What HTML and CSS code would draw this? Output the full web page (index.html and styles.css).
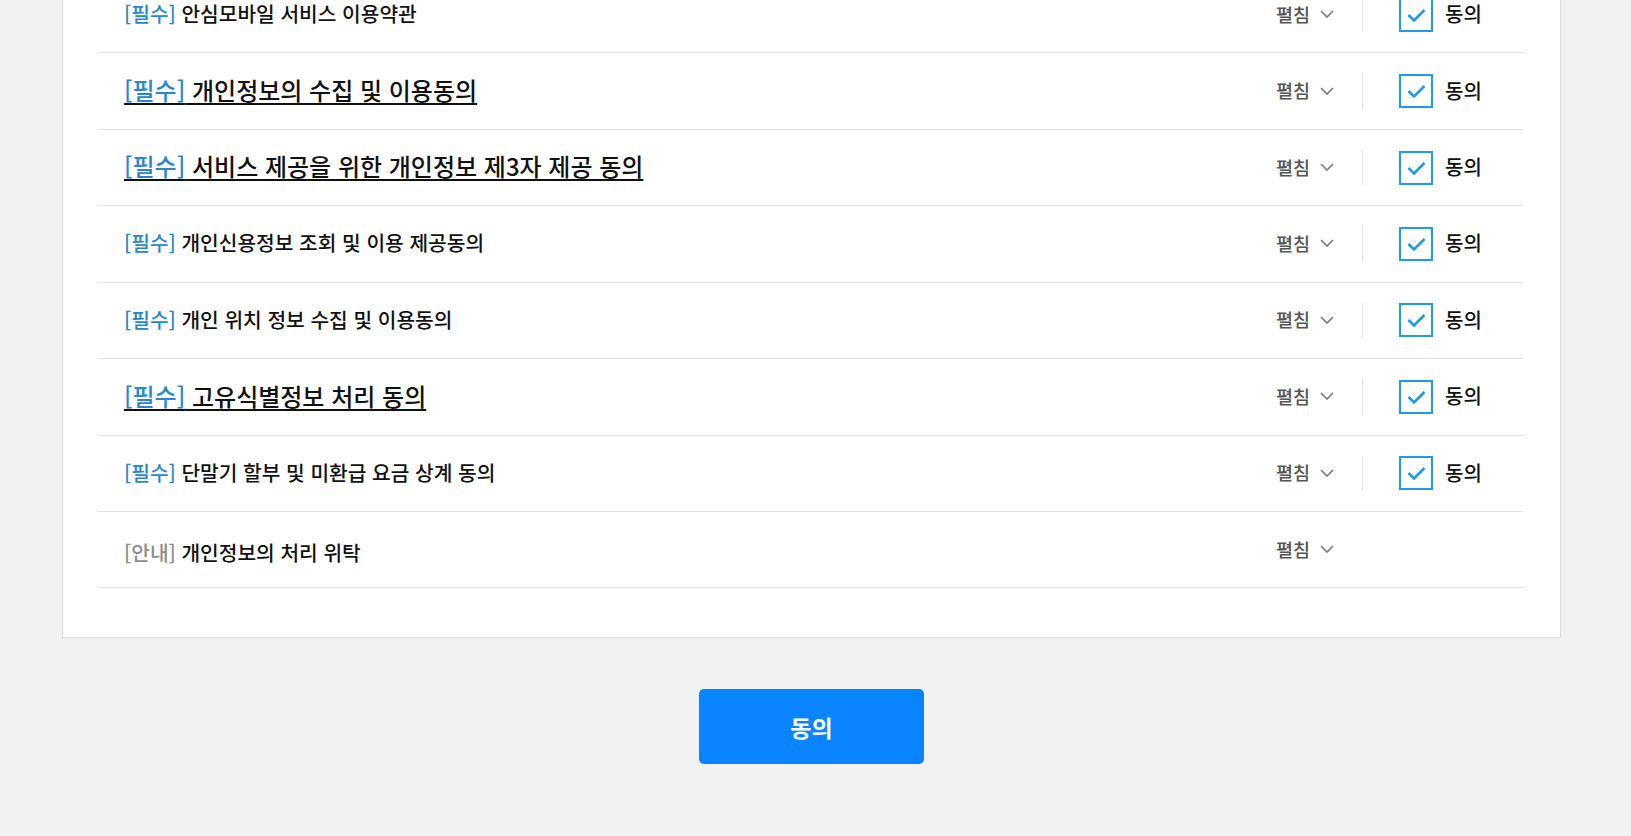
FILE: index.html
```html
<!DOCTYPE html>
<html lang="ko">
<head>
<meta charset="utf-8">
<title>약관 동의</title>
<link rel="stylesheet" href="styles.css">
</head>
<body>
<div class="page">
  <div class="card">
    <ul class="terms">
      <li class="term">
        <p class="label"><span class="tag">[필수]</span> 안심모바일 서비스 이용약관</p>
        <button class="toggle" type="button">펼침<svg class="chev" width="14" height="8" viewBox="0 0 14 8"><path d="M1 1l6 6 6-6" fill="none" stroke="#777" stroke-width="1.6"/></svg></button>
        <div class="agree"><span class="box"><svg width="30" height="30" viewBox="0 0 30 30"><path d="M7.5 15l5.5 5.5L23.5 10" fill="none" stroke="#1e9be4" stroke-width="2.6"/></svg></span><span class="agree-text">동의</span></div>
      </li>
      <li class="term">
        <p class="label label-lg"><span class="tag">[필수]</span> 개인정보의 수집 및 이용동의</p>
        <button class="toggle" type="button">펼침<svg class="chev" width="14" height="8" viewBox="0 0 14 8"><path d="M1 1l6 6 6-6" fill="none" stroke="#777" stroke-width="1.6"/></svg></button>
        <div class="agree"><span class="box"><svg width="30" height="30" viewBox="0 0 30 30"><path d="M7.5 15l5.5 5.5L23.5 10" fill="none" stroke="#1e9be4" stroke-width="2.6"/></svg></span><span class="agree-text">동의</span></div>
      </li>
      <li class="term">
        <p class="label label-lg"><span class="tag">[필수]</span> 서비스 제공을 위한 개인정보 제3자 제공 동의</p>
        <button class="toggle" type="button">펼침<svg class="chev" width="14" height="8" viewBox="0 0 14 8"><path d="M1 1l6 6 6-6" fill="none" stroke="#777" stroke-width="1.6"/></svg></button>
        <div class="agree"><span class="box"><svg width="30" height="30" viewBox="0 0 30 30"><path d="M7.5 15l5.5 5.5L23.5 10" fill="none" stroke="#1e9be4" stroke-width="2.6"/></svg></span><span class="agree-text">동의</span></div>
      </li>
      <li class="term">
        <p class="label"><span class="tag">[필수]</span> 개인신용정보 조회 및 이용 제공동의</p>
        <button class="toggle" type="button">펼침<svg class="chev" width="14" height="8" viewBox="0 0 14 8"><path d="M1 1l6 6 6-6" fill="none" stroke="#777" stroke-width="1.6"/></svg></button>
        <div class="agree"><span class="box"><svg width="30" height="30" viewBox="0 0 30 30"><path d="M7.5 15l5.5 5.5L23.5 10" fill="none" stroke="#1e9be4" stroke-width="2.6"/></svg></span><span class="agree-text">동의</span></div>
      </li>
      <li class="term">
        <p class="label"><span class="tag">[필수]</span> 개인 위치 정보 수집 및 이용동의</p>
        <button class="toggle" type="button">펼침<svg class="chev" width="14" height="8" viewBox="0 0 14 8"><path d="M1 1l6 6 6-6" fill="none" stroke="#777" stroke-width="1.6"/></svg></button>
        <div class="agree"><span class="box"><svg width="30" height="30" viewBox="0 0 30 30"><path d="M7.5 15l5.5 5.5L23.5 10" fill="none" stroke="#1e9be4" stroke-width="2.6"/></svg></span><span class="agree-text">동의</span></div>
      </li>
      <li class="term">
        <p class="label label-lg"><span class="tag">[필수]</span> 고유식별정보 처리 동의</p>
        <button class="toggle" type="button">펼침<svg class="chev" width="14" height="8" viewBox="0 0 14 8"><path d="M1 1l6 6 6-6" fill="none" stroke="#777" stroke-width="1.6"/></svg></button>
        <div class="agree"><span class="box"><svg width="30" height="30" viewBox="0 0 30 30"><path d="M7.5 15l5.5 5.5L23.5 10" fill="none" stroke="#1e9be4" stroke-width="2.6"/></svg></span><span class="agree-text">동의</span></div>
      </li>
      <li class="term">
        <p class="label"><span class="tag">[필수]</span> 단말기 할부 및 미환급 요금 상계 동의</p>
        <button class="toggle" type="button">펼침<svg class="chev" width="14" height="8" viewBox="0 0 14 8"><path d="M1 1l6 6 6-6" fill="none" stroke="#777" stroke-width="1.6"/></svg></button>
        <div class="agree"><span class="box"><svg width="30" height="30" viewBox="0 0 30 30"><path d="M7.5 15l5.5 5.5L23.5 10" fill="none" stroke="#1e9be4" stroke-width="2.6"/></svg></span><span class="agree-text">동의</span></div>
      </li>
      <li class="term">
        <p class="label label-info"><span class="tag tag-info">[안내]</span> 개인정보의 처리 위탁</p>
        <button class="toggle" type="button">펼침<svg class="chev" width="14" height="8" viewBox="0 0 14 8"><path d="M1 1l6 6 6-6" fill="none" stroke="#777" stroke-width="1.6"/></svg></button>
        <div class="agree agree-empty"></div>
      </li>
    </ul>
  </div>
  <div class="actions">
    <button class="btn-agree" type="button">동의</button>
  </div>
</div>
</body>
</html>
```

FILE: styles.css
```css
html, body {
  margin: 0;
  padding: 0;
  background: #f2f2f2;
  font-family: "Noto Sans CJK KR", "Noto Sans", sans-serif;
  color: #111;
}

.page {
  width: 1499px;
  margin-left: 62px;
}

.card {
  margin-top: -24px;
  background: #fff;
  border: 1px solid #dcdcdc;
  padding: 0 37px 49px 35px;
}

.terms {
  list-style: none;
  margin: 0;
  padding: 0;
}

.term {
  display: flex;
  align-items: center;
  height: 76.43px;
  box-sizing: border-box;
  border-bottom: 1px solid #e2e2e2;
  padding-left: 26px;
}

.label {
  flex: 1;
  margin: 0;
  padding-bottom: 3px;
  font-size: 20.3px;
  font-weight: 500;
  color: #111;
  line-height: 1.3;
}

.label-lg {
  font-size: 24px;
  text-decoration: underline;
  text-decoration-thickness: 2px;
  text-underline-offset: 3px;
}

.label-info {
  padding-top: 9px;
}

.tag {
  color: #2987c9;
}

.tag-info {
  color: #8c8c8c;
}

.toggle {
  display: flex;
  align-items: center;
  gap: 10px;
  margin: 0 28px 2px 0;
  padding: 0;
  border: 0;
  background: none;
  font-family: inherit;
  font-size: 18.5px;
  font-weight: 500;
  color: #555;
  cursor: pointer;
}

.chev {
  display: block;
  margin-top: 1px;
}

.agree {
  width: 161px;
  height: 35px;
  box-sizing: border-box;
  border-left: 1px solid #e6e6e6;
  padding-left: 36px;
  display: flex;
  align-items: center;
}

.agree-empty {
  border-left-color: transparent;
}

.box {
  width: 34px;
  height: 34px;
  box-sizing: border-box;
  border: 2px solid #1e9be4;
  display: flex;
  align-items: center;
  justify-content: center;
  background: #fff;
}

.box svg {
  display: block;
}

.agree-text {
  margin-left: 12px;
  padding-bottom: 2px;
  font-size: 20px;
  font-weight: 500;
  color: #111;
}

.actions {
  display: flex;
  justify-content: center;
  padding-top: 51px;
}

.btn-agree {
  width: 225px;
  height: 75px;
  border: 0;
  border-radius: 5px;
  background: #0a84ff;
  color: #fff;
  font-family: inherit;
  font-size: 23px;
  font-weight: 700;
  cursor: pointer;
}
```
